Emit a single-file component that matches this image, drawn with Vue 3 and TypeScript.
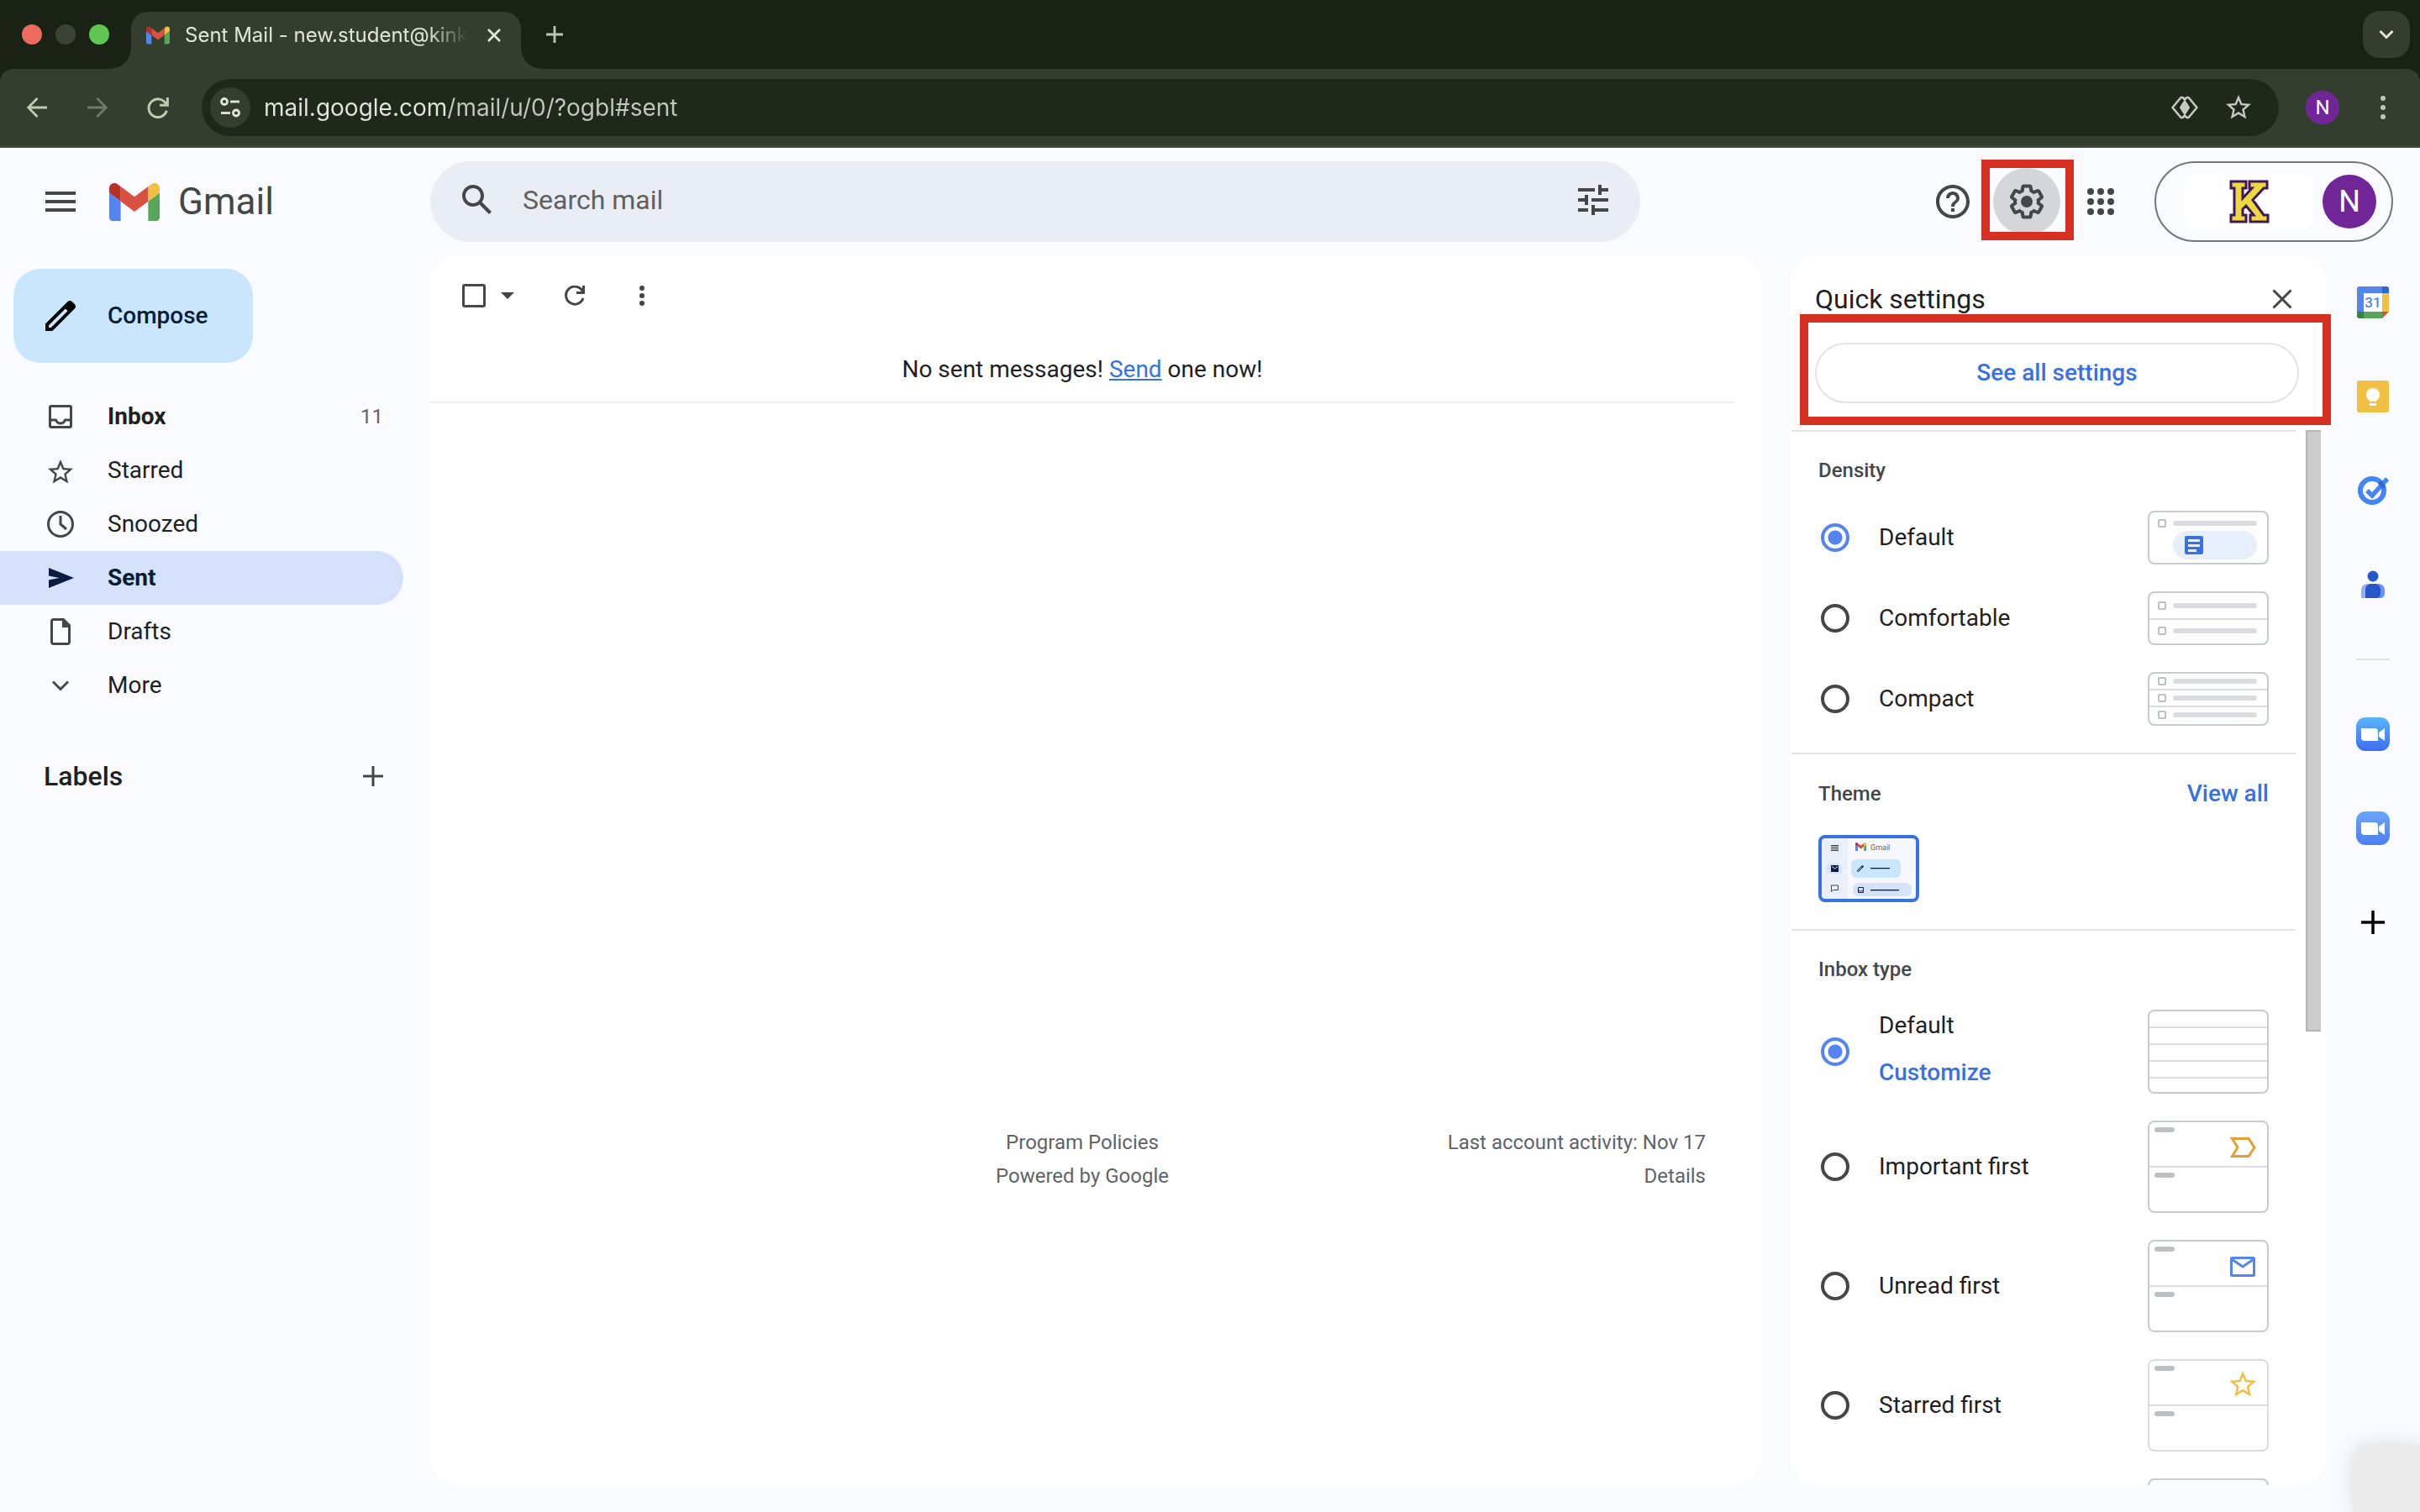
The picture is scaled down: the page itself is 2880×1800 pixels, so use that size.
<script setup lang="ts">
import { ref } from 'vue'

interface NavItem {
  id: string
  label: string
  count?: number
  bold?: boolean
}

interface Option {
  id: string
  label: string
}

const navItems: NavItem[] = [
  { id: 'inbox', label: 'Inbox', count: 11, bold: true },
  { id: 'starred', label: 'Starred' },
  { id: 'snoozed', label: 'Snoozed' },
  { id: 'sent', label: 'Sent', bold: true },
  { id: 'drafts', label: 'Drafts' },
  { id: 'more', label: 'More' },
]

const densities: Option[] = [
  { id: 'default', label: 'Default' },
  { id: 'comfortable', label: 'Comfortable' },
  { id: 'compact', label: 'Compact' },
]

const inboxTypes: Option[] = [
  { id: 'default', label: 'Default' },
  { id: 'important', label: 'Important first' },
  { id: 'unread', label: 'Unread first' },
  { id: 'starred', label: 'Starred first' },
]

const activeFolder = ref('sent')
const density = ref('default')
const inboxType = ref('default')
const address = ref('mail.google.com/mail/u/0/?ogbl#sent')
const query = ref('')

const starPath =
  'M22 9.24l-7.19-.62L12 2 9.19 8.63 2 9.24l5.46 4.73L5.82 21 12 17.27 18.18 21l-1.63-7.03L22 9.24zM12 15.4l-3.76 2.27 1-4.28-3.32-2.88 4.38-.38L12 6.1l1.71 4.04 4.38.38-3.32 2.88 1 4.28L12 15.4z'
const pencilPath =
  'M3 21v-4.2L16.2 3.6c.8-.8 2-.8 2.8 0l1.4 1.4c.8.8.8 2 0 2.8L7.2 21zM5 19h1.4l9.9-9.9-1.4-1.4L5 17.6z'
</script>

<template>
  <div class="window">
    <header class="browser">
      <div class="tab-strip">
        <div class="lights">
          <span class="light red"></span>
          <span class="light grey"></span>
          <span class="light green"></span>
        </div>
        <div class="tab">
          <svg class="favicon" viewBox="52 42 88 66" aria-hidden="true">
            <path fill="#5484ed" d="M58 108h14V74L52 59v43c0 3.32 2.69 6 6 6" />
            <path fill="#58a55c" d="M120 108h14c3.32 0 6-2.69 6-6V59l-20 15" />
            <path fill="#f1bf42" d="M120 48v26l20-15v-8c0-7.42-8.47-11.65-14.4-7.2" />
            <path fill="#d85140" d="M72 74V48l24 18 24-18v26L96 92" />
            <path fill="#b43127" d="M52 51v8l20 15V48l-5.6-4.2c-5.94-4.45-14.4-.22-14.4 7.2" />
          </svg>
          <span class="tab-title">Sent Mail - new.student@kink</span>
          <button class="tab-close" aria-label="Close tab">
            <svg viewBox="0 0 16 16" width="16" height="16"><path d="M1 1l14 14M15 1L1 15" stroke="#e3e6dc" stroke-width="2.6" /></svg>
          </button>
        </div>
        <button class="new-tab" aria-label="New tab">
          <svg viewBox="0 0 20 20" width="20" height="20"><path d="M10 0v20M0 10h20" stroke="#bccab0" stroke-width="2.8" /></svg>
        </button>
        <button class="tab-search" aria-label="Search tabs">
          <svg viewBox="0 0 18 12" width="18" height="12"><path d="M1.500 2l7.500 7.500L16.500 2" fill="none" stroke="#e3e6dc" stroke-width="3" /></svg>
        </button>
      </div>
      <div class="toolbar">
        <button class="tool" aria-label="Back">
          <svg viewBox="0 0 24 24" width="24" height="24"><path d="M24 12H2M12.500 1L1.700 12l10.800 11" fill="none" stroke="#bccab0" stroke-width="2.800" /></svg>
        </button>
        <button class="tool" aria-label="Forward">
          <svg viewBox="0 0 24 24" width="24" height="24"><path d="M0 12h22M11.500 1l10.800 11-10.800 11" fill="none" stroke="#71796a" stroke-width="2.800" /></svg>
        </button>
        <button class="tool" aria-label="Reload">
          <svg viewBox="0 0 24 24" width="26" height="26"><path d="M21.500 15.500A10 10 0 1 1 21 8.500M22.500 1v8.500H14" fill="none" stroke="#bccab0" stroke-width="2.800" /></svg>
        </button>
        <div class="omnibox">
          <button class="site-info" aria-label="Site information">
            <svg viewBox="0 0 24 24" width="24" height="24">
              <g fill="none" stroke="#e3e6dc" stroke-width="2.800">
                <circle cx="5" cy="5" r="3.500" /><path d="M12 5h11" />
                <circle cx="19" cy="18.500" r="3.500" /><path d="M1 18.500h11" />
              </g>
            </svg>
          </button>
          <input v-model="address" class="address" type="text" aria-label="Address" />
          <button class="tool" aria-label="Page tools">
            <svg viewBox="0 0 32 28" width="32" height="28">
              <path d="M16 7l4.500 7-4.500 7-4.500-7z" fill="#c6c9c0" stroke="#c6c9c0" stroke-width="3" stroke-linejoin="round" />
              <path d="M17 5.500L13.500 2h-2L1.500 14l10 12h2l3.500-3.500M15 5.500L18.500 2h2l10 12-10 12h-2L15 22.500" fill="none" stroke="#c6c9c0" stroke-width="2.600" stroke-linejoin="round" />
            </svg>
          </button>
          <button class="tool" aria-label="Bookmark this tab">
            <svg viewBox="0 0 24 24" width="36" height="36"><path :d="starPath" fill="#c6c9c0" /></svg>
          </button>
        </div>
        <button class="profile-dot" aria-label="Browser profile">N</button>
        <button class="tool menu" aria-label="Browser menu">
          <svg viewBox="0 0 8 30" width="8" height="30" fill="#bccab0"><circle cx="4" cy="4" r="3" /><circle cx="4" cy="15" r="3" /><circle cx="4" cy="26" r="3" /></svg>
        </button>
      </div>
    </header>

    <div class="app-header">
      <div class="brand">
        <button class="icon-btn menu-btn" aria-label="Main menu">
          <svg viewBox="0 0 36 24" width="36" height="24" fill="#444746"><path d="M0 0h36v4H0zM0 10h36v4H0zM0 20h36v4H0z" /></svg>
        </button>
        <a href="#" class="logo" aria-label="Gmail home">
          <svg viewBox="52 42 88 66" width="60" height="45" aria-hidden="true">
            <path fill="#5484ed" d="M58 108h14V74L52 59v43c0 3.32 2.69 6 6 6" />
            <path fill="#58a55c" d="M120 108h14c3.32 0 6-2.69 6-6V59l-20 15" />
            <path fill="#f1bf42" d="M120 48v26l20-15v-8c0-7.42-8.47-11.65-14.4-7.2" />
            <path fill="#d85140" d="M72 74V48l24 18 24-18v26L96 92" />
            <path fill="#b43127" d="M52 51v8l20 15V48l-5.6-4.2c-5.94-4.45-14.4-.22-14.4 7.2" />
          </svg>
          <span>Gmail</span>
        </a>
      </div>
      <form class="search" role="search" @submit.prevent>
        <button class="icon-btn" type="submit" aria-label="Search">
          <svg viewBox="0 0 24 24" width="48" height="48" fill="#444746"><path d="M20.49,19l-5.73-5.73C15.53,12.2,16,10.91,16,9.5C16,5.91,13.09,3,9.5,3S3,5.91,3,9.5C3,13.09,5.91,16,9.5,16c1.41,0,2.7-0.47,3.77-1.24L19,20.49L20.49,19z M5,9.5C5,7.01,7.01,5,9.5,5S14,7.01,14,9.5S11.99,14,9.5,14S5,11.99,5,9.5z" /></svg>
        </button>
        <input v-model="query" type="text" placeholder="Search mail" aria-label="Search mail" />
        <button class="icon-btn" type="button" aria-label="Show search options">
          <svg viewBox="0 0 24 24" width="48" height="48" fill="#444746"><path d="M3 17v2h6v-2H3zM3 5v2h10V5H3zm10 16v-2h8v-2h-8v-2h-2v6h2zM7 9v2H3v2h4v2h2V9H7zm14 4v-2H11v2h10zm-6-4h2V7h4V5h-4V3h-2v6z" /></svg>
        </button>
      </form>
      <div class="actions">
        <button class="round-btn" aria-label="Support">
          <svg viewBox="0 0 24 24" width="48" height="48" fill="#444746"><path d="M11 18h2v-2h-2v2zm1-16C6.48 2 2 6.48 2 12s4.48 10 10 10 10-4.48 10-10S17.52 2 12 2zm0 18c-4.41 0-8-3.59-8-8s3.59-8 8-8 8 3.59 8 8-3.59 8-8 8zm0-14c-2.21 0-4 1.79-4 4h2c0-1.1.9-2 2-2s2 .9 2 2c0 2-3 1.75-3 5h2c0-2.25 3-2.5 3-5 0-2.21-1.79-4-4-4z" /></svg>
        </button>
        <div class="marked">
          <button class="round-btn pressed" aria-label="Settings">
            <svg viewBox="0 0 24 24" width="48" height="48" fill="#444746">
              <path d="M13.85 22.25h-3.7c-.74 0-1.36-.54-1.45-1.27l-.27-1.89c-.27-.14-.53-.29-.79-.46l-1.8.72c-.7.26-1.47-.03-1.81-.65L2.2 15.53c-.35-.66-.2-1.44.36-1.88l1.53-1.19c-.01-.15-.02-.3-.02-.46 0-.15.01-.31.02-.46l-1.52-1.19c-.59-.45-.74-1.26-.37-1.88l1.85-3.19c.34-.62 1.11-.9 1.79-.63l1.81.73c.26-.17.52-.32.78-.46l.27-1.91c.09-.7.71-1.25 1.44-1.25h3.7c.74 0 1.36.54 1.45 1.27l.27 1.89c.27.14.53.29.79.46l1.8-.72c.71-.26 1.48.03 1.82.65l1.84 3.18c.36.66.2 1.44-.36 1.88l-1.52 1.19c.01.15.02.3.02.46s-.01.31-.02.46l1.52 1.19c.56.45.72 1.23.37 1.86l-1.86 3.22c-.34.62-1.11.9-1.8.63l-1.8-.72c-.26.17-.52.32-.78.46l-.27 1.91c-.1.68-.72 1.22-1.46 1.22zm-3.23-2h2.76l.37-2.55.53-.22c.44-.18.88-.44 1.34-.78l.45-.34 2.38.96 1.38-2.4-2.03-1.58.07-.56c.03-.26.06-.51.06-.78s-.03-.53-.06-.78l-.07-.56 2.03-1.58-1.39-2.4-2.39.96-.45-.35c-.42-.32-.87-.58-1.33-.77l-.52-.22-.37-2.55h-2.76l-.37 2.55-.53.21c-.44.19-.88.44-1.34.79l-.45.33-2.38-.95-1.39 2.39 2.03 1.58-.07.56a7 7 0 0 0-.06.79c0 .26.02.53.06.78l.07.56-2.03 1.58 1.38 2.4 2.39-.96.45.35c.43.33.86.58 1.33.77l.53.22.38 2.55z" />
              <circle cx="12" cy="12" r="3.5" />
            </svg>
          </button>
          <span class="callout callout-gear"></span>
        </div>
        <button class="round-btn" aria-label="Google apps">
          <svg viewBox="0 0 32 32" width="32" height="32" fill="#444746">
            <template v-for="r in 3" :key="r">
              <circle v-for="c in 3" :key="c" :cx="c * 12 - 8" :cy="r * 12 - 8" r="4" />
            </template>
          </svg>
        </button>
        <div class="account">
          <div class="school">
            <svg viewBox="0 0 48 52" width="48" height="52" aria-label="School logo">
              <path d="M2 2h18v8h-4v12L27 10h-3V2h21v8h-4L28 24l13 18h5v8H25v-8h4l-9-11-4 4v7h4v8H2v-8h4V10H2z" fill="#ecd83f" stroke="#43165c" stroke-width="3" />
            </svg>
          </div>
          <button class="avatar" aria-label="Google Account">N</button>
        </div>
      </div>
    </div>

    <div class="body">
      <aside class="sidebar">
        <button class="compose">
          <svg viewBox="0 0 24 24" width="48" height="48"><path :d="pencilPath" fill-rule="evenodd" /></svg>
          <span>Compose</span>
        </button>
        <nav>
          <a
            v-for="item in navItems"
            :key="item.id"
            href="#"
            class="nav-item"
            :class="{ bold: item.bold, active: item.id === activeFolder }"
            @click.prevent="activeFolder = item.id"
          >
            <svg viewBox="0 0 40 40" width="40" height="40" aria-hidden="true">
              <g v-if="item.id === 'inbox'" fill="none" stroke="#444746" stroke-width="3">
                <rect x="7.500" y="7.500" width="25" height="25" rx="1.500" />
                <path d="M7 24h7.500c1 2.500 3 4 5.500 4s4.500-1.500 5.500-4H33" />
              </g>
              <path v-else-if="item.id === 'starred'" :d="starPath" transform="translate(2 4) scale(1.500)" fill="#444746" />
              <g v-else-if="item.id === 'snoozed'" fill="none" stroke="#444746" stroke-width="3">
                <circle cx="20" cy="20" r="14.500" />
                <path d="M20 10v10l7 6" />
              </g>
              <path v-else-if="item.id === 'sent'" d="M6 32V22.500L18.500 20 6 17.500V8l30 12z" fill="#0a1b44" />
              <g v-else-if="item.id === 'drafts'">
                <path d="M23.500 5.500h-12c-1 0-2 1-2 2v25c0 1 1 2 2 2h17c1 0 2-1 2-2v-20z" fill="none" stroke="#444746" stroke-width="3" />
                <path d="M22 5h2l8 7v3H22z" fill="#444746" />
              </g>
              <path v-else d="M11 15.500l9 9 9-9" fill="none" stroke="#444746" stroke-width="3" />
            </svg>
            <span class="nav-label">{{ item.label }}</span>
            <span v-if="item.count" class="nav-count">{{ item.count }}</span>
          </a>
        </nav>
        <div class="labels">
          <h2>Labels</h2>
          <button class="icon-btn" aria-label="Create new label">
            <svg viewBox="0 0 24 24" width="24" height="24"><path d="M12 0v24M0 12h24" stroke="#444746" stroke-width="3" /></svg>
          </button>
        </div>
      </aside>

      <main class="mail">
        <div class="mail-tools">
          <input type="checkbox" class="select-all" aria-label="Select" />
          <button class="icon-btn caret" aria-label="Select options">
            <svg viewBox="0 0 16 8" width="16" height="8" fill="#444746"><path d="M0 0h16L8 8z" /></svg>
          </button>
          <button class="icon-btn refresh" aria-label="Refresh">
            <svg viewBox="0 0 24 24" width="24" height="24"><path d="M22 15A10.500 10.500 0 1 1 21.500 7M22.500 0v8.500H14" fill="none" stroke="#444746" stroke-width="3" /></svg>
          </button>
          <button class="icon-btn" aria-label="More options">
            <svg viewBox="0 0 8 24" width="8" height="24" fill="#444746"><circle cx="4" cy="3" r="3" /><circle cx="4" cy="12" r="3" /><circle cx="4" cy="21" r="3" /></svg>
          </button>
        </div>
        <p class="empty">No sent messages! <a href="#">Send</a> one now!</p>
        <footer class="mail-footer">
          <span></span>
          <div class="center">
            <a href="#">Program Policies</a>
            <span>Powered by Google</span>
          </div>
          <div class="right">
            <span>Last account activity: Nov 17</span>
            <a href="#">Details</a>
          </div>
        </footer>
      </main>

      <section class="panel" aria-label="Quick settings">
        <div class="panel-head">
          <h2>Quick settings</h2>
          <button class="icon-btn" aria-label="Close">
            <svg viewBox="0 0 24 24" width="24" height="24"><path d="M1.500 1.500l21 21M22.500 1.500l-21 21" stroke="#444746" stroke-width="3" /></svg>
          </button>
        </div>
        <div class="marked see-all-row">
          <button class="see-all">See all settings</button>
          <span class="callout callout-see"></span>
        </div>
        <div class="scroller">
          <div class="groups">
            <section class="group">
              <div class="group-title"><h3>Density</h3></div>
              <div v-for="o in densities" :key="o.id" class="option">
                <input :id="'density-' + o.id" v-model="density" type="radio" name="density" :value="o.id" />
                <div class="option-text"><label :for="'density-' + o.id">{{ o.label }}</label></div>
                <svg viewBox="0 0 144 64" width="144" height="64" aria-hidden="true">
                  <rect x="1" y="1" width="142" height="62" rx="7" fill="#fff" stroke="#c7cace" stroke-width="2" />
                  <template v-if="o.id === 'default'">
                    <rect x="13" y="11" width="8" height="8" rx="1" fill="none" stroke="#bdc1c6" stroke-width="2" />
                    <rect x="30" y="12" width="100" height="6" rx="3" fill="#dadce0" />
                    <rect x="30" y="24" width="100" height="34" rx="17" fill="#e8effc" />
                    <rect x="44" y="30" width="22" height="22" rx="2" fill="#3871e0" />
                    <path d="M48 34h14v3H48zM48 40h14v3H48zM48 46h10v3H48z" fill="#e8effc" />
                  </template>
                  <template v-else-if="o.id === 'comfortable'">
                    <rect x="2" y="32" width="140" height="2" fill="#dadce0" />
                    <template v-for="y in [17, 47]" :key="y">
                      <rect x="13" :y="y - 4" width="8" height="8" rx="1" fill="none" stroke="#bdc1c6" stroke-width="2" />
                      <rect x="30" :y="y - 3" width="100" height="6" rx="3" fill="#dadce0" />
                    </template>
                  </template>
                  <template v-else>
                    <rect x="2" y="20" width="140" height="2" fill="#dadce0" />
                    <rect x="2" y="40" width="140" height="2" fill="#dadce0" />
                    <template v-for="y in [11, 31, 51]" :key="y">
                      <rect x="13" :y="y - 4" width="8" height="8" rx="1" fill="none" stroke="#bdc1c6" stroke-width="2" />
                      <rect x="30" :y="y - 3" width="100" height="6" rx="3" fill="#dadce0" />
                    </template>
                  </template>
                </svg>
              </div>
            </section>

            <section class="group">
              <div class="group-title with-link"><h3>Theme</h3><a href="#">View all</a></div>
              <button class="theme" aria-label="Default theme">
                <svg viewBox="0 0 120 80" width="120" height="80">
                  <rect x="2" y="2" width="116" height="76" rx="4" fill="#f7f8fd" />
                  <rect x="2" y="2" width="33" height="76" fill="#eaf0fa" />
                  <path d="M15 12h9v1.400h-9zM15 14.800h9v1.400h-9zM15 17.600h9V19h-9z" fill="#444746" />
                  <rect x="9" y="34" width="20" height="12" rx="6" fill="#d6e1fb" />
                  <path d="M15 36h9v8h-9z" fill="#0a1b44" />
                  <path d="M16 37.500l3.500 2.500 3.500-2.500" fill="none" stroke="#d6e1fb" />
                  <path d="M15.500 67.500v-7.500h8v5.500h-6z" fill="none" stroke="#444746" />
                  <g transform="translate(44 9) scale(.15) translate(-52 -42)">
                    <path fill="#5484ed" d="M58 108h14V74L52 59v43c0 3.32 2.69 6 6 6" />
                    <path fill="#58a55c" d="M120 108h14c3.32 0 6-2.69 6-6V59l-20 15" />
                    <path fill="#f1bf42" d="M120 48v26l20-15v-8c0-7.42-8.47-11.65-14.4-7.2" />
                    <path fill="#d85140" d="M72 74V48l24 18 24-18v26L96 92" />
                    <path fill="#b43127" d="M52 51v8l20 15V48l-5.6-4.2c-5.94-4.45-14.4-.22-14.4 7.2" />
                  </g>
                  <text x="62" y="18" font-size="9" fill="#5f6368">Gmail</text>
                  <rect x="39" y="29" width="59" height="22" rx="6" fill="#cae6fd" />
                  <path :d="pencilPath" transform="translate(45 35) scale(.42)" fill-rule="evenodd" fill="#0a1b44" />
                  <rect x="62" y="39" width="23" height="1.300" fill="#0a1b44" />
                  <rect x="41" y="57" width="70" height="16" rx="7" fill="#d6e1fb" />
                  <path d="M47.500 62.500h6v6h-6zM47.500 66.500h2l1 1 1-1h2" fill="none" stroke="#0a1b44" />
                  <rect x="62" y="65" width="34" height="1.300" fill="#0a1b44" />
                  <rect x="2" y="2" width="116" height="76" rx="6" fill="none" stroke="#3871e0" stroke-width="4" />
                </svg>
              </button>
            </section>

            <section class="group">
              <div class="group-title"><h3>Inbox type</h3></div>
              <div v-for="o in inboxTypes" :key="o.id" class="option">
                <input :id="'inbox-' + o.id" v-model="inboxType" type="radio" name="inbox-type" :value="o.id" />
                <div class="option-text" :class="{ stacked: o.id === 'default' }">
                  <label :for="'inbox-' + o.id">{{ o.label }}</label>
                  <a v-if="o.id === 'default'" href="#">Customize</a>
                </div>
                <svg v-if="o.id === 'default'" viewBox="0 0 144 100" width="144" height="100" aria-hidden="true">
                  <rect x="1" y="1" width="142" height="98" rx="7" fill="#fff" stroke="#c7cace" stroke-width="2" />
                  <path d="M2 21h140M2 41h140M2 61h140M2 81h140" stroke="#dadce0" stroke-width="2" />
                </svg>
                <svg v-else viewBox="0 0 144 110" width="144" height="110" aria-hidden="true">
                  <rect x="1" y="1" width="142" height="108" rx="7" fill="#fff" :stroke="o.id === 'starred' ? '#dadce0' : '#c7cace'" stroke-width="2" />
                  <path d="M2 55h140" stroke="#dadce0" stroke-width="2" />
                  <rect x="8" y="8" width="24" height="6" rx="3" fill="#bdc1c6" />
                  <rect x="8" y="62" width="24" height="6" rx="3" fill="#bdc1c6" />
                  <path v-if="o.id === 'important'" d="M100.500 21.500h19.500l7 10.500-7 10.500h-19.500l6.500-10.500z" fill="none" stroke="#e69d32" stroke-width="3" />
                  <g v-else-if="o.id === 'unread'" fill="none" stroke="#5484ed" stroke-width="3">
                    <rect x="99.500" y="21.500" width="27" height="21" rx="1" />
                    <path d="M100 23l13 9 13-9" />
                  </g>
                  <path v-else :d="starPath" transform="translate(94 11) scale(1.600)" fill="#f1bf42" />
                </svg>
              </div>
              <div class="option" aria-hidden="true">
                <svg class="next" viewBox="0 0 144 110" width="144" height="110">
                  <rect x="1" y="1" width="142" height="108" rx="7" fill="#fff" stroke="#c7cace" stroke-width="2" />
                </svg>
              </div>
            </section>
          </div>
          <div class="scrollbar"><span class="thumb"></span></div>
        </div>
      </section>

      <aside class="rail">
        <button aria-label="Calendar">
          <svg viewBox="0 0 38 38" width="38" height="38">
            <path d="M3 0h27v8H8v22H0V3a3 3 0 0 1 3-3z" fill="#5484ed" />
            <path d="M30 0h5a3 3 0 0 1 3 3v5h-8z" fill="#2f66cf" />
            <path d="M30 8h8v22h-8z" fill="#f1bf42" />
            <path d="M8 30h22v8H8z" fill="#58a55c" />
            <path d="M0 30h8v8H3a3 3 0 0 1-3-3z" fill="#39803e" />
            <path d="M30 30h8l-8 8z" fill="#d85140" />
            <path d="M8 8h22v22H8z" fill="#fff" />
            <text x="19" y="25" text-anchor="middle" font-size="17" font-weight="500" fill="#5484ed">31</text>
          </svg>
        </button>
        <button aria-label="Keep">
          <svg viewBox="0 0 38 38" width="38" height="38">
            <rect width="38" height="38" rx="3" fill="#f1bf42" />
            <circle cx="19" cy="17" r="8" fill="#fff" />
            <path d="M15 22h8v3h-8zM15 27h8v3h-8z" fill="#fff" />
          </svg>
        </button>
        <button aria-label="Tasks">
          <svg viewBox="0 0 38 38" width="38" height="38">
            <circle cx="18" cy="19" r="14" fill="#fff" stroke="#4285f4" stroke-width="6" />
            <path d="M12 19l6 6L36 5" fill="none" stroke="#4285f4" stroke-width="5.500" />
            <path d="M25 11l6 6 3-3-5-7z" fill="#2f66cf" />
          </svg>
        </button>
        <button aria-label="Contacts">
          <svg viewBox="0 0 38 38" width="38" height="38">
            <circle cx="19" cy="9" r="6.500" fill="#2557c7" />
            <path d="M5 35V26c0-5 3-8 8-8h3v17z" fill="#93aef5" />
            <path d="M18 18h7c5 0 8 3 8 8v3c0 4-2 6-6 6h-9z" fill="#6a93f7" />
            <path d="M10 35V25c0-4 3-7 7-7h4c4 0 7 3 7 7v4c0 4-2 6-6 6z" fill="#2557c7" />
          </svg>
        </button>
        <span class="rule"></span>
        <button v-for="n in 2" :key="n" :aria-label="'Zoom ' + n">
          <svg viewBox="0 0 40 40" width="40" height="40">
            <defs>
              <linearGradient :id="'zoom-' + n" x1="0" y1="0" x2="0" y2="1">
                <stop offset="0" :stop-color="n === 1 ? '#5bb5fa' : '#6ca4f7'" />
                <stop offset="1" :stop-color="n === 1 ? '#3d6cf5' : '#4c7ff0'" />
              </linearGradient>
            </defs>
            <rect width="40" height="40" rx="11" :fill="`url(#zoom-${n})`" />
            <path d="M6 13h16a4 4 0 0 1 4 4v11H10a4 4 0 0 1-4-4zM27 18l7-5v15l-7-5z" fill="#fff" />
          </svg>
        </button>
        <button aria-label="Get add-ons">
          <svg viewBox="0 0 28 28" width="28" height="28"><path d="M14 0v28M0 14h28" stroke="#000" stroke-width="3.500" /></svg>
        </button>
      </aside>
    </div>
    <div class="corner-toast"></div>
  </div>
</template>

<style>
body {
  margin: 0;
  background: #f9fbff;
}
</style>

<style scoped>
.window {
  position: relative;
  display: flex;
  flex-direction: column;
  height: 100vh;
  overflow: hidden;
  background: #f9fbff;
  color: #1f1f1f;
  font-family: Roboto, "Liberation Sans", sans-serif;
  font-size: 28px;
  line-height: 32px;
}
.window * {
  box-sizing: border-box;
}
button {
  display: flex;
  align-items: center;
  justify-content: center;
  flex: none;
  margin: 0;
  padding: 0;
  border: 0;
  background: none;
  color: inherit;
  font: inherit;
}
input {
  font: inherit;
}
svg {
  display: block;
  flex: none;
}
h2,
h3,
p {
  margin: 0;
}
a {
  color: inherit;
  text-decoration: none;
}

/* browser chrome */
.browser {
  flex: none;
  background: #192214;
  font-family: Inter, Roboto, sans-serif;
}
.tab-strip {
  display: flex;
  align-items: center;
  height: 82px;
  padding: 0 12px 0 26px;
}
.lights {
  display: flex;
  gap: 16px;
}
.light {
  width: 24px;
  height: 24px;
  border-radius: 50%;
}
.light.red {
  background: #ed6a5e;
}
.light.grey {
  background: #3b4337;
}
.light.green {
  background: #61c554;
}
.tab {
  position: relative;
  display: flex;
  align-items: center;
  align-self: flex-end;
  width: 464px;
  height: 68px;
  margin-left: 26px;
  padding: 0 16px 12px 18px;
  border-radius: 20px 20px 0 0;
  background: #343e2e;
}
.tab::before,
.tab::after {
  content: "";
  position: absolute;
  bottom: 0;
  width: 24px;
  height: 24px;
}
.tab::before {
  right: 100%;
  background: radial-gradient(circle at 0 0, transparent 23px, #343e2e 24px);
}
.tab::after {
  left: 100%;
  background: radial-gradient(circle at 100% 0, transparent 23px, #343e2e 24px);
}
.favicon {
  width: 28px;
  height: 22px;
}
.tab-title {
  flex: 1;
  margin: 0 16px 0 18px;
  overflow: hidden;
  white-space: nowrap;
  color: #e3e6dc;
  font-size: 24px;
  mask-image: linear-gradient(to right, #000 86%, transparent);
}
.tab-close {
  width: 32px;
  height: 32px;
}
.new-tab {
  width: 40px;
  height: 40px;
  margin-left: 20px;
}
.tab-search {
  width: 56px;
  height: 56px;
  margin-left: auto;
  border-radius: 20px;
  background: #343e2e;
}
.toolbar {
  display: flex;
  align-items: center;
  gap: 24px;
  height: 94px;
  padding: 0 20px;
  border-bottom: 2px solid #474d42;
  border-radius: 16px 16px 0 0;
  background: #343e2e;
}
.tool {
  width: 48px;
  height: 48px;
}
.omnibox {
  display: flex;
  flex: 1;
  align-items: center;
  gap: 16px;
  height: 68px;
  margin: 0 8px 0 4px;
  padding: 0 24px 0 10px;
  border-radius: 34px;
  background: #1f281a;
}
.site-info {
  width: 48px;
  height: 48px;
  border-radius: 50%;
  background: #343e2e;
}
.address {
  flex: 1;
  min-width: 0;
  height: 40px;
  padding: 0;
  border: 0;
  outline: 0;
  background: linear-gradient(to right, #e3e6dc 216px, #c3c7bd 216px);
  background-clip: text;
  color: transparent;
  font-size: 28px;
}
.profile-dot {
  width: 40px;
  height: 40px;
  margin-right: 4px;
  border-radius: 50%;
  background: #712698;
  color: #fff;
  font-family: Roboto, sans-serif;
  font-size: 24px;
}

/* application header */
.app-header {
  display: flex;
  flex: none;
  align-items: center;
  height: 128px;
  padding-right: 32px;
}
.brand {
  display: flex;
  flex: none;
  align-items: center;
  width: 512px;
  padding-left: 54px;
}
.logo {
  display: flex;
  align-items: center;
  gap: 22px;
  margin-left: 40px;
  color: #444746;
  font-size: 44px;
  line-height: 48px;
}
.search {
  display: flex;
  flex: 0 1 1440px;
  align-items: center;
  height: 96px;
  padding: 0 32px 4px;
  border-radius: 48px;
  background: #e9eef6;
}
.search input {
  flex: 1;
  min-width: 0;
  height: 48px;
  margin: 0 28px 0 30px;
  padding: 0;
  border: 0;
  outline: 0;
  background: none;
  font-size: 32px;
}
.search input::placeholder {
  color: #5f6060;
  opacity: 1;
}
.actions {
  display: flex;
  align-items: center;
  gap: 8px;
  margin-left: auto;
}
.round-btn {
  width: 80px;
  height: 80px;
  border-radius: 50%;
}
.pressed {
  background: #d5d6da;
}
.marked {
  position: relative;
}
.callout {
  position: absolute;
  z-index: 2;
  border: 10px solid #d53022;
  pointer-events: none;
}
.callout-gear {
  inset: -10px -16px -6px -14px;
}
.callout-see {
  inset: -34px -38px -26px -18px;
}
.account {
  display: flex;
  align-items: center;
  gap: 10px;
  width: 284px;
  height: 96px;
  margin-left: 16px;
  padding: 0 18px 0 34px;
  border: 2px solid #747775;
  border-radius: 48px;
}
.school {
  display: flex;
  flex: 1;
  align-items: center;
  justify-content: center;
  height: 64px;
  border-radius: 12px;
  background: #fff;
}
.avatar {
  width: 64px;
  height: 64px;
  border-radius: 50%;
  background: #712698;
  color: #fff;
  font-size: 36px;
}

/* body */
.body {
  display: grid;
  flex: 1;
  grid-template-columns: 512px minmax(0, 1fr) 638px 112px;
  min-height: 0;
  padding-bottom: 32px;
}
.sidebar {
  padding-right: 32px;
}
.compose {
  justify-content: flex-start;
  gap: 32px;
  width: 285px;
  height: 112px;
  margin: 16px 0 32px 16px;
  padding-left: 32px;
  border-radius: 32px;
  background: #cae6fd;
  color: #041e38;
  font-weight: 500;
}
.nav-item {
  display: flex;
  align-items: center;
  gap: 36px;
  height: 64px;
  padding: 0 24px 0 52px;
  border-radius: 0 32px 32px 0;
}
.nav-item.bold {
  font-weight: 700;
}
.nav-item.active {
  background: #d6e1fb;
  color: #041e38;
}
.nav-label {
  flex: 1;
}
.nav-count {
  color: #5f6368;
  font-size: 24px;
  font-weight: 400;
}
.labels {
  display: flex;
  align-items: center;
  justify-content: space-between;
  margin-top: 60px;
  padding: 0 24px 0 52px;
}
.labels h2 {
  font-size: 32px;
  font-weight: 500;
  line-height: 32px;
}
.mail {
  display: flex;
  flex-direction: column;
  margin-right: 34px;
  border-radius: 32px;
  background: #fff;
}
.mail-tools {
  display: flex;
  align-items: center;
  height: 96px;
  padding-left: 38px;
}
.select-all {
  appearance: none;
  width: 28px;
  height: 28px;
  margin: 0;
  border: 3px solid #444746;
  border-radius: 3px;
}
.caret {
  width: 52px;
}
.refresh {
  width: 108px;
  margin-right: 22px;
}
.empty {
  height: 80px;
  margin-right: 32px;
  padding-top: 24px;
  border-bottom: 2px solid #eee;
  text-align: center;
}
.empty a {
  color: #3871e0;
  text-decoration: underline;
}
.mail-footer {
  display: grid;
  grid-template-columns: 1fr auto 1fr;
  margin: 860px 66px 0 34px;
  color: #5f6368;
  font-size: 24px;
  line-height: 40px;
}
.mail-footer .center,
.mail-footer .right {
  display: flex;
  flex-direction: column;
}
.mail-footer .center {
  align-items: center;
}
.mail-footer .right {
  align-items: flex-end;
}

/* quick settings */
.panel {
  display: flex;
  flex-direction: column;
  min-height: 0;
  border-radius: 32px;
  background: #fff;
}
.panel-head {
  display: flex;
  align-items: center;
  justify-content: space-between;
  flex: none;
  height: 104px;
  padding: 0 40px 0 30px;
}
.panel-head h2 {
  font-size: 32px;
  font-weight: 400;
}
.see-all-row {
  flex: none;
  margin: 0 32px 32px 30px;
}
.see-all {
  width: 100%;
  height: 72px;
  border: 2px solid #e3e3e3;
  border-radius: 36px;
  color: #3871e0;
  font-weight: 500;
}
.scroller {
  display: flex;
  flex: 1;
  gap: 12px;
  min-height: 0;
  padding: 0 6px 0 2px;
  overflow: hidden;
  border-radius: 0 0 32px 32px;
}
.groups {
  flex: 1;
}
.group {
  padding: 30px 32px 32px;
  border-top: 2px solid #e3e3e3;
}
.group-title {
  display: flex;
  align-items: center;
  justify-content: space-between;
  margin-bottom: 32px;
}
.group-title.with-link {
  height: 34px;
}
.group-title h3 {
  color: #444746;
  font-size: 24px;
  font-weight: 500;
  line-height: 32px;
}
.group a {
  color: #3871e0;
  font-weight: 500;
}
.option {
  display: flex;
  align-items: center;
}
.option + .option {
  margin-top: 32px;
}
.option input {
  appearance: none;
  flex: none;
  width: 34px;
  height: 34px;
  margin: 0 35px 0 3px;
  border: 4px solid #444746;
  border-radius: 50%;
}
.option input:checked {
  border-color: #5484ed;
  background: radial-gradient(circle, #5484ed 8px, transparent 9px);
}
.option-text {
  display: flex;
  flex: 1;
  flex-direction: column;
  gap: 24px;
}
.option-text.stacked {
  padding-bottom: 6px;
}
.next {
  margin-left: auto;
}
.theme {
  width: 120px;
  height: 80px;
}
.scrollbar {
  width: 18px;
}
.thumb {
  display: block;
  height: 57%;
  border: solid #b5b5b5;
  border-width: 2px 0 2px 2px;
  background: #ccc;
}

/* side rail */
.rail {
  display: flex;
  flex-direction: column;
  align-items: center;
  gap: 72px;
  padding-top: 36px;
}
.rail button {
  width: 40px;
  height: 40px;
}
.rail .rule {
  width: 40px;
  height: 2px;
  margin: -4px 0;
  background: #e0e0e0;
}
.corner-toast {
  position: absolute;
  right: 0;
  bottom: 0;
  width: 80px;
  height: 80px;
  border-radius: 20px 0 0 0;
  background: #ebebeb;
  box-shadow: 0 0 24px #0002;
}
</style>
